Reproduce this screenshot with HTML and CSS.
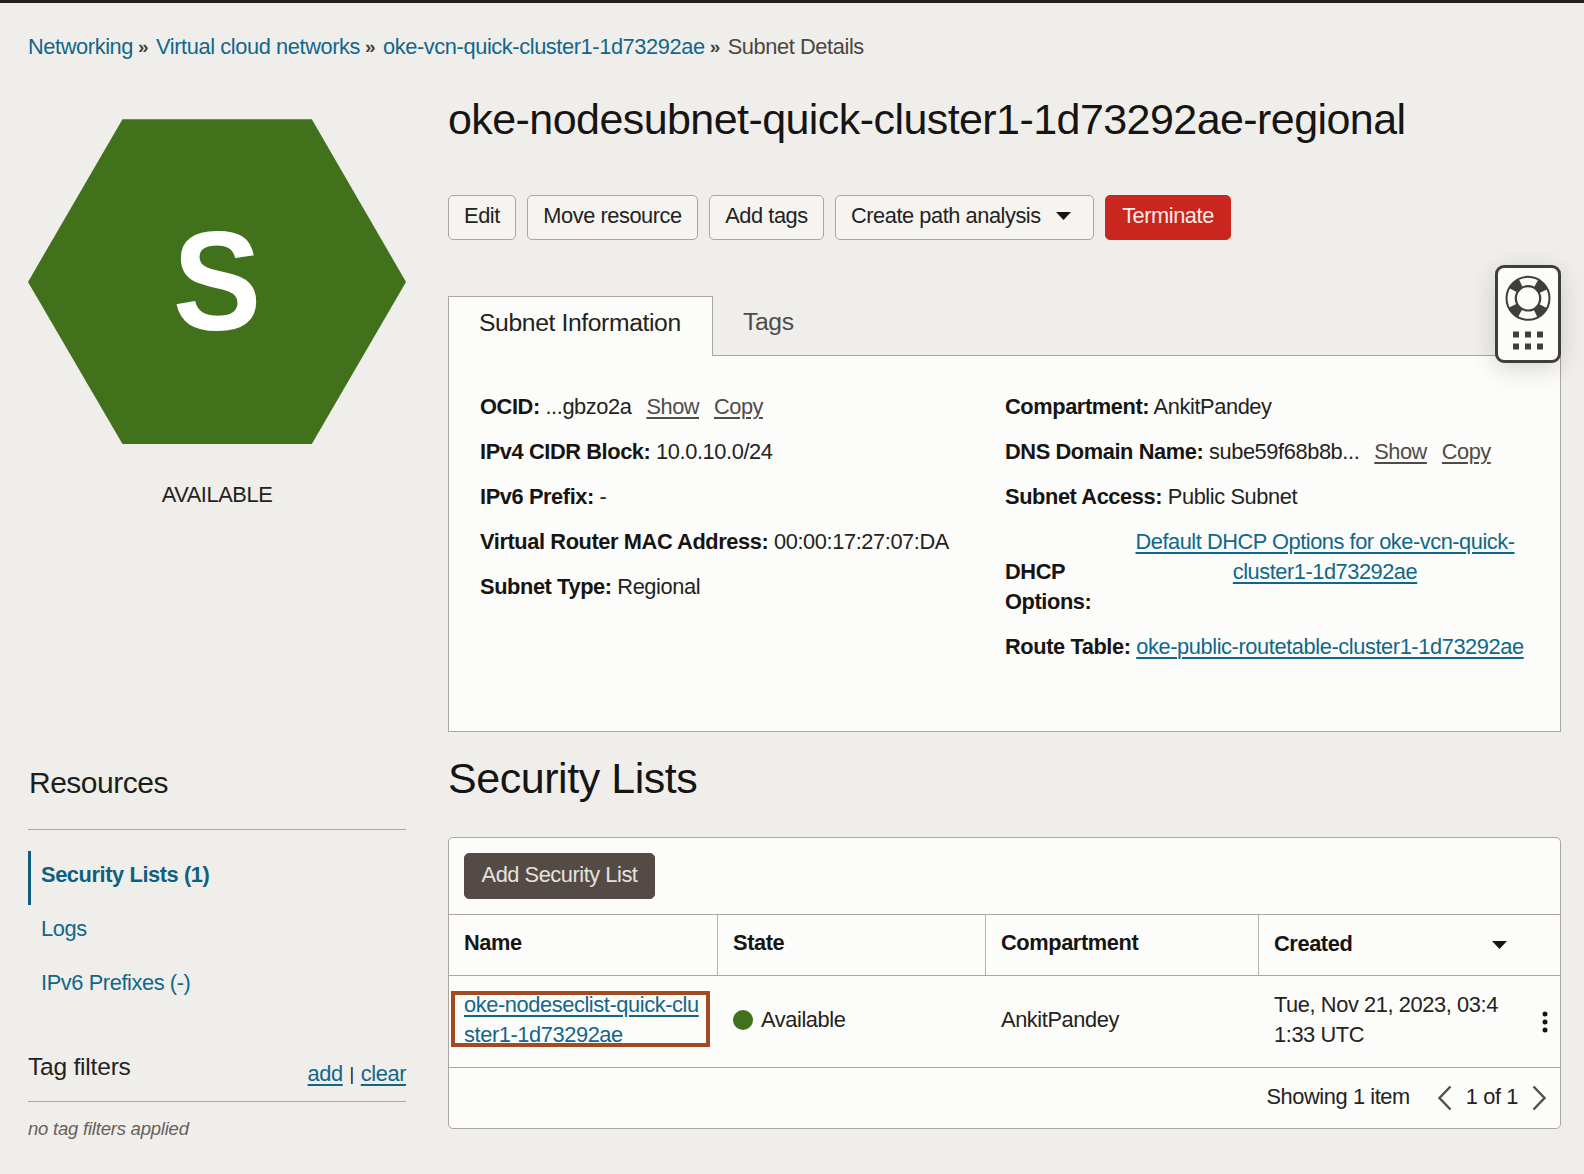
FILE: index.html
```html
<!DOCTYPE html>
<html lang="en">
<head>
<meta charset="utf-8">
<title>Subnet Details</title>
<link rel="stylesheet" href="styles.css">
</head>
<body>
<div class="topbar"></div>
<nav class="breadcrumb">
  <a>Networking</a><span class="sep">»</span><a>Virtual cloud networks</a><span class="sep">»</span><a>oke-vcn-quick-cluster1-1d73292ae</a><span class="sep">»</span><span class="current">Subnet Details</span>
</nav>
<div class="page">
  <aside class="side">
    <div class="status">
      <svg class="hexagon" width="378" height="326" viewBox="0 0 378 326">
        <path d="M94.5 .3h189.300L378 162.900l-94.200 162H94.500L0 162.900z" fill="#41711b"/>
        <text transform="translate(189 211) scale(.97 1.025)" text-anchor="middle" class="hexletter">S</text>
      </svg>
      <div class="state">AVAILABLE</div>
    </div>
    <h2 class="side-title">Resources</h2>
    <ul class="resources">
      <li class="active">Security Lists (1)</li>
      <li>Logs</li>
      <li>IPv6 Prefixes (-)</li>
    </ul>
    <div class="filters">
      <h3>Tag filters</h3>
      <div class="filter-actions"><a class="link">add</a><span class="bar">|</span><a class="link">clear</a></div>
    </div>
    <p class="nofilters">no tag filters applied</p>
  </aside>
  <main class="main">
    <h1>oke-nodesubnet-quick-cluster1-1d73292ae-regional</h1>
    <div class="actions">
      <button class="btn edit">Edit</button>
      <button class="btn move">Move resource</button>
      <button class="btn tags">Add tags</button>
      <button class="btn path">Create path analysis<svg class="caret" width="15" height="8" viewBox="0 0 15 8"><path d="M0 0h15L7.500 8z" fill="#161513"/></svg></button>
      <button class="btn danger">Terminate</button>
    </div>
    <div class="tabs">
      <div class="tab selected">Subnet Information</div>
      <div class="tab">Tags</div>
    </div>
    <section class="panel">
      <div class="col left">
        <div class="row"><b>OCID:</b> ...gbzo2a<a class="mini">Show</a><a class="mini copy">Copy</a></div>
        <div class="row"><b>IPv4 CIDR Block:</b> 10.0.10.0/24</div>
        <div class="row"><b>IPv6 Prefix:</b> -</div>
        <div class="row"><b>Virtual Router MAC Address:</b> 00:00:17:27:07:DA</div>
        <div class="row"><b>Subnet Type:</b> Regional</div>
      </div>
      <div class="col">
        <div class="row"><b>Compartment:</b> AnkitPandey</div>
        <div class="row"><b>DNS Domain Name:</b> sube59f68b8b...<a class="mini">Show</a><a class="mini copy">Copy</a></div>
        <div class="row"><b>Subnet Access:</b> Public Subnet</div>
        <div class="row dhcp"><b>DHCP<br>Options:</b><a class="link">Default DHCP Options for oke-vcn-quick-<br>cluster1-1d73292ae</a></div>
        <div class="row"><b>Route Table:</b> <a class="link">oke-public-routetable-cluster1-1d73292ae</a></div>
      </div>
    </section>
    <h1 class="section">Security Lists</h1>
    <section class="table">
      <div class="toolbar"><button class="btn dark">Add Security List</button></div>
      <div class="thead">
        <div>Name</div><div>State</div><div>Compartment</div>
        <div class="created">Created<svg width="15" height="8" viewBox="0 0 15 8"><path d="M0 0h15L7.500 8z" fill="#161513"/></svg></div>
      </div>
      <div class="trow">
        <div class="name"><a class="link">oke-nodeseclist-quick-clu<br>ster1-1d73292ae</a><span class="highlight"></span></div>
        <div class="avail"><i class="dot"></i>Available</div>
        <div>AnkitPandey</div>
        <div class="date">Tue, Nov 21, 2023, 03:4<br>1:33 UTC</div>
        <svg class="kebab" width="6" height="22" viewBox="0 0 6 22" fill="#161513"><circle cx="3" cy="3" r="2.500"/><circle cx="3" cy="11" r="2.500"/><circle cx="3" cy="19" r="2.500"/></svg>
      </div>
      <div class="tfoot">
        <span>Showing 1 item</span>
        <svg class="prev" width="15" height="26" viewBox="0 0 15 26"><path d="M13.500 1.500 2.500 13 13.500 24.500" fill="none" stroke="#57504c" stroke-width="2.500"/></svg>
        <span>1 of 1</span>
        <svg class="next" width="15" height="26" viewBox="0 0 15 26"><path d="M1.500 1.500 12.500 13 1.500 24.500" fill="none" stroke="#57504c" stroke-width="2.500"/></svg>
      </div>
    </section>
  </main>
</div>
<div class="help">
  <svg width="60" height="92" viewBox="0 0 60 92">
    <g fill="none" stroke="#403e3b">
      <circle cx="30" cy="30.300" r="17" stroke-width="9" stroke-dasharray="10.600 16.103" stroke-dashoffset="-8.050"/>
      <circle cx="30" cy="30.300" r="21.500" stroke-width="2"/>
      <circle cx="30" cy="30.300" r="12.200" stroke-width="2.200"/>
    </g>
    <path d="M15 63.500h6v6h-6zM27 63.500h6v6h-6zM39 63.500h6v6h-6zM15 75.500h6v6h-6zM27 75.500h6v6h-6zM39 75.500h6v6h-6z" fill="#403e3b"/>
  </svg>
</div>
</body>
</html>
```
FILE: styles.css
```css
* { box-sizing: border-box; }
body {
  margin: 0;
  height: 1174px;
  overflow: hidden;
  background: #f0eeeb;
  color: #242220;
  font: 21.800px/30px "Liberation Sans", Arial, sans-serif;
  letter-spacing: -.4px;
  white-space: nowrap;
}
h1, h2, h3, p, ul { margin: 0; padding: 0; font-weight: 400; }
b { color: #161513; }
a { color: #10678a; }
.topbar { height: 3px; background: #24211d; }
.breadcrumb { display: flex; height: 30px; margin: 29px 0 0 28px; }
.sep { width: 23px; padding-left: 5px; font-size: 19px; font-weight: 700; color: #45413e; }
.current { color: #4a4643; }
.page { display: grid; grid-template-columns: 378px 1113px; column-gap: 42px; padding: 32px 0 0 28px; }

.status { height: 667px; padding-top: 25px; }
.hexagon { display: block; }
.hexletter { font-size: 137px; font-weight: 700; fill: #fff; letter-spacing: 0; }
.state { margin-top: 35px; text-align: center; }
.side-title { height: 69px; padding: 5px 0 0 1px; border-bottom: 1px solid #ada59f; font-size: 30px; letter-spacing: -.5px; line-height: 34px; color: #201e1c; }
.resources { height: 190px; padding-top: 21px; list-style: none; }
.resources li { height: 54px; padding: 9px 0 0 10px; border-left: 3px solid transparent; color: #10678a; }
.resources .active { border-color: #0f5f80; font-weight: 700; color: #0f5f80; }
.filters { display: flex; justify-content: space-between; height: 50px; margin-top: 32px; border-bottom: 1px solid #ada59f; }
.filters h3 { font-size: 24.500px; letter-spacing: -.2px; line-height: 30px; }
.filter-actions { display: flex; padding-top: 7px; }
.bar { width: 18px; text-align: center; font-size: 18px; }
.nofilters { padding-top: 12px; font-size: 18.500px; letter-spacing: -.22px; font-style: italic; color: #68605b; }
.link { text-decoration: underline; text-decoration-thickness: 2px; text-underline-offset: 3px; }

h1 { height: 101px; padding-top: 1px; font-size: 43px; letter-spacing: -.57px; line-height: 48px; color: #161513; }
.actions { display: flex; gap: 11px; }
.btn { height: 45px; padding: 0 0 3px; border: 1px solid #ada59f; border-radius: 5px; background: #f5f4f1; color: #242220; font: inherit; letter-spacing: -.45px; line-height: 30px; }
.edit { width: 68px; }
.move { width: 171px; }
.tags { width: 115px; }
.path { width: 259px; display: flex; align-items: center; padding-left: 15px; }
.caret { margin-left: 15px; }
.danger { width: 126px; background: #c8261e; border-color: #c8261e; color: #faeae7; }
.tabs { display: flex; height: 59px; margin-top: 56px; font-size: 24.700px; letter-spacing: -.38px; }
.tab { padding: 11px 31px 0 30px; color: #4f4b48; }
.selected { position: relative; z-index: 1; width: 265px; height: 60px; padding: 11px 0 0 30px; border: 1px solid #ada59f; border-bottom: 0; background: #fcfcfa; color: #242220; }
.panel { display: grid; grid-template-columns: 525px 1fr; height: 377px; padding: 36px 0 0 31px; border: 1px solid #ada59f; background: #fcfcfa; }
.row { height: 30px; margin-bottom: 15px; }
.mini { margin-left: 15px; letter-spacing: -.5px; color: #4f4b48; text-decoration: underline; text-decoration-thickness: 2px; text-underline-offset: 3px; }
.dhcp { display: flex; height: 90px; }
.dhcp b { width: 130px; padding-top: 30px; }
.dhcp a { width: 380px; letter-spacing: -.46px; text-align: center; }
.section { height: 84px; margin-top: 21px; letter-spacing: -.45px; }
.table { height: 292px; border: 1px solid #ada59f; border-radius: 5px; background: #fcfcfa; }
.toolbar { height: 77px; padding: 15px; border-bottom: 1px solid #ada59f; }
.dark { width: 191px; height: 46px; background: #544b47; border-color: #544b47; color: #e6e2df; }
.thead, .trow { display: grid; grid-template-columns: 269px 268px 273px 1fr; }
.thead { height: 61px; border-bottom: 1px solid #ada59f; font-weight: 700; color: #161513; }
.thead > div { padding: 13px 15px; border-right: 1px solid #b9b1ac; }
.thead > .created { display: flex; justify-content: space-between; align-items: center; padding: 0 53px 3px 15px; border: 0; }
.created svg { margin-top: 3px; }
.trow { position: relative; height: 92px; align-items: center; border-bottom: 1px solid #ada59f; }
.trow > div { padding: 0 0 4px 15px; }
.name { position: relative; }
.avail { display: flex; align-items: center; gap: 8px; }
.dot { width: 20px; height: 20px; border-radius: 50%; background: #41711b; }
.highlight { position: absolute; left: 2px; top: 1px; width: 259px; height: 56px; border: 4px solid #a34a20; }
.kebab { position: absolute; right: 12px; top: 35px; }
.tfoot { display: flex; justify-content: flex-end; align-items: center; height: 59px; padding: 0 13px 2px 0; }
.prev { margin: 3px 14px 0 27px; }
.next { margin: 3px 0 0 14px; }
.help { position: absolute; left: 1495px; top: 265px; width: 66px; height: 98px; border: 3px solid #403e3b; border-radius: 9px; background: #fcfcfa; box-shadow: 0 6px 24px rgba(22, 21, 19, .16); }
.help svg { display: block; }
```
